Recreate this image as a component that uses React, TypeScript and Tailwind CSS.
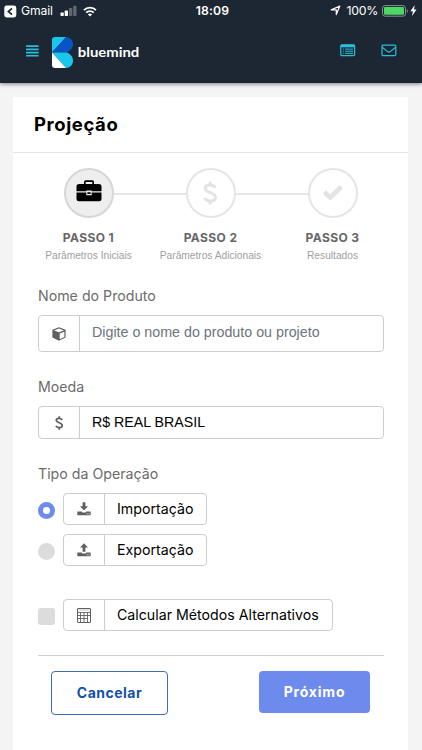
import type { ReactNode } from "react";

const sf = "font-['Inter','Liberation_Sans',sans-serif]";
const helv = "font-['Liberation_Sans',sans-serif]";

function StatusBar() {
  return (
    <div className={`flex h-[22px] items-center justify-between pl-1 pr-[5px] text-white ${sf}`}>
      <div className="flex w-[130px] items-center">
        <svg width="13" height="13" viewBox="0 0 13 13">
          <rect x="0.3" y="0.5" width="12" height="12" rx="2.4" fill="#fff" />
          <path d="M8 3.4 4.4 6.5 8 9.6" fill="none" stroke="#1c2733" strokeWidth="1.7" />
        </svg>
        <span className="ml-[4px] w-[39px] text-[12.2px] leading-none tracking-[-0.15px]">Gmail</span>
        <svg width="17" height="12" viewBox="0 0 17 12" fill="#fff">
          <rect x="0.5" y="7.5" width="3.3" height="3.5" rx="0.7" />
          <rect x="4.7" y="5.5" width="3.3" height="5.5" rx="0.7" />
          <rect x="9" y="3" width="3.3" height="8" rx="0.7" opacity="0.3" />
          <rect x="13.2" y="0.7" width="3.3" height="10.3" rx="0.7" opacity="0.3" />
        </svg>
        <svg className="ml-[6px]" width="14" height="11" viewBox="0 0 14 11" fill="none" stroke="#fff" strokeWidth="1.8">
          <path d="M1 4.1C4.2.8 9.8.8 13 4.1" />
          <path d="M3.2 6.6C5.3 4.5 8.7 4.5 10.8 6.6" />
          <path d="M7 10.6 4.9 8.4Q7 6.7 9.1 8.4Z" fill="#fff" stroke="none" />
        </svg>
      </div>
      <span className="ml-[4px] mt-px text-[12.2px] font-semibold leading-none tracking-[0.2px]">18:09</span>
      <div className="flex w-[130px] items-center justify-end">
        <svg width="11" height="11" viewBox="0 0 11 11" fill="none" stroke="#fff" strokeWidth="1.2" strokeLinejoin="round">
          <path d="M9.8 1.1 6.3 9.6V4.8H1.2Z" />
        </svg>
        <span className="ml-[5px] mt-px text-[12.3px] leading-none tracking-[-0.25px]">100%</span>
        <svg className="ml-[4px]" width="27" height="12" viewBox="0 0 27 12">
          <rect x="0.5" y="0.6" width="23" height="10.6" rx="2.6" fill="none" stroke="#8b9097" />
          <rect x="2" y="2" width="20" height="7.8" rx="1.3" fill="#4bd964" />
          <path d="M24.8 4v4c1.4-.6 1.4-3.4 0-4" fill="#8b9097" />
        </svg>
        <svg className="ml-[1px]" width="7" height="11" viewBox="0 0 7 11" fill="#fff">
          <path d="M4.7 0 .4 6.2h2.5L2 11l4.5-6.4H4Z" />
        </svg>
      </div>
    </div>
  );
}

function Header() {
  return (
    <header className="h-[83px] shrink-0 bg-[#1c2733] shadow-[0_1px_4px_rgba(0,0,0,0.5)]">
      <StatusBar />
      <div className="flex h-[60px] items-center pl-[26px] pr-[25px]">
        <svg className="-mt-[3px]" width="13" height="12" viewBox="0 0 13 12" fill="#27c0dc">
          <rect width="12.7" height="1.7" y="0.3" rx=".5" />
          <rect width="12.7" height="1.7" y="3.5" rx=".5" />
          <rect width="12.7" height="1.7" y="6.7" rx=".5" />
          <rect width="12.7" height="1.7" y="9.9" rx=".5" />
        </svg>
        <svg className="ml-[13px]" width="21" height="31" viewBox="0 0 21 31">
          <path d="M3 0H14L0 15.5V3Q0 0 3 0Z" fill="#19c7ee" />
          <path d="M14 0C21.5 .6 23.5 9.5 17.6 13.8Q16.3 15 14.5 15.5H0Z" fill="#0755c5" />
          <path d="M0 15.5H14.5C23.5 18 23 30.5 14 31Z" fill="#19c7ee" />
          <path d="M0 15.5 14 31H3Q0 31 0 28Z" fill="#fff" />
        </svg>
        <svg className="ml-[4px]" width="64" height="20" viewBox="0 0 64 20">
          <text x="0.8" y="15.2" textLength="61.5" lengthAdjust="spacingAndGlyphs" fill="#fff" className="font-['Lato',sans-serif] text-[13.6px] font-bold">
            bluemind
          </text>
        </svg>
        <div className="-mt-[3px] ml-auto flex items-center gap-[25px]">
          <svg className="-mt-px" width="16" height="13" viewBox="0 0 16 13" fill="none" stroke="#27c0dc">
            <rect x="0.8" y="0.8" width="13.8" height="10.8" rx="1.3" strokeWidth="1.2" />
            <path d="M1 2H14.5" strokeWidth="2.6" />
            <path d="M2.8 5.1h1M5 5.1h8M2.8 7.2h1M5 7.2h8M2.8 9.3h1M5 9.3h8" strokeWidth="1" />
          </svg>
          <svg width="16" height="13" viewBox="0 0 16 13" fill="none" stroke="#27c0dc" strokeWidth="1.2">
            <rect x="1" y="1.1" width="13.8" height="10.6" rx="1.2" />
            <path d="M1.2 3.2 6.6 7.6Q7.9 8.5 9.2 7.6L14.6 3.2" />
          </svg>
        </div>
      </div>
    </header>
  );
}

const Dollar = ({ className, size }: { className: string; size: number }) => (
  <svg className={className} width={size * 0.6} height={size} viewBox="0 0 15 25" fill="none" stroke="currentColor" strokeWidth="3.1">
    <path d="M7.5 0.5V4M7.5 21V24.5M13 6.8C10 3.3 2.3 3.2 2.3 7.8C2.3 12.8 13 11.5 13 16.8C13 21.6 5 22.3 1.4 17.8" />
  </svg>
);

const Briefcase = () => (
  <svg className="-mt-[5px]" width="26" height="22" viewBox="0 0 26 22" fill="#000">
    <path d="M8 4V2Q8 .3 9.7.3H16.3Q18 .3 18 2V4H23Q25.5 4 25.5 6.5V11.3H15.7V10.6H10.3V11.3H.5V6.5Q.5 4 3 4ZM9.7 4H16.3V2H9.7Z" fillRule="evenodd" />
    <path d="M.5 12.4H10.3V15.3H15.7V12.4H25.5V18.7Q25.5 21.2 23 21.2H3Q.5 21.2.5 18.7Z" />
    <path d="M11.4 12.2H14.6V14H11.4Z" />
  </svg>
);

const Check = () => (
  <svg className="-mt-px" width="22" height="18" viewBox="0 0 22 18" fill="none" stroke="#e3e3e3" strokeWidth="4.8">
    <path d="M2.4 8 8.2 13.4 19.3 2.8" strokeLinejoin="miter" />
  </svg>
);

const Cube = () => (
  <svg width="14" height="14" viewBox="0 0 14 14">
    <path d="M7 .2 13.6 2.8V10.6L7 13.8.4 10.6V2.8Z" fill="#606060" />
    <path d="M7 1.6 11.9 3.4 7 5.3 2.1 3.4Z" fill="#fff" />
    <path d="M7.7 6.6 12.4 4.7V9.9L7.7 12.2Z" fill="#fff" />
  </svg>
);

const Transfer = ({ up }: { up?: boolean }) => (
  <svg width="14" height="14" viewBox="0 0 14 14" fill="#606060">
    <path d={up ? "M7 .3 11 4.6H8.4V8.7H5.6V4.6H3Z" : "M5.6.3H8.4V4.2H11L7 8.5 3 4.2H5.6Z"} />
    <path d="M.3 10Q.3 9.4.9 9.4H4.6Q5.2 10.6 7 10.6 8.8 10.6 9.4 9.4H13.1Q13.7 9.4 13.7 10V12.6Q13.7 13.2 13.1 13.2H.9Q.3 13.2.3 12.6Z" />
    <path d="M9.7 11.3h.9v.9h-.9ZM11.6 11.3h.9v.9h-.9Z" fill="#fff" />
  </svg>
);

const Calculator = () => (
  <svg width="14" height="15" viewBox="0 0 14 15" fill="none" stroke="#606060">
    <rect x=".5" y=".5" width="13" height="14" rx=".5" strokeWidth="1" />
    <path d="M.5 4.5H13.5M.5 7.5H13.5M.5 10.5H10.5M3.5 4.5V14.5M7 4.5V14.5M10.5 4.5V14.5" strokeWidth=".9" />
    <path d="M1.5 2H12.5" strokeWidth=".4" />
  </svg>
);

function Step({ icon, title, sub, active }: { icon: ReactNode; title: string; sub: string; active?: boolean }) {
  return (
    <div className="flex w-[122px] flex-col items-center">
      <div className={`z-10 flex h-[50px] w-[50px] items-center justify-center rounded-full border-2 ${active ? "border-[#d6d6d6] bg-[#eeeeee]" : "border-[#e5e5e5] bg-white"}`}>
        {icon}
      </div>
      <div className={`mt-[11px] whitespace-nowrap text-[12px] font-bold leading-[18px] tracking-[0.4px] text-[#666] ${sf}`}>{title}</div>
      <div className={`mt-[2px] whitespace-nowrap text-[10.2px] leading-[14px] text-[#a0a0a0] ${helv}`}>{sub}</div>
    </div>
  );
}

function Field({ icon, children, className }: { icon: ReactNode; children: ReactNode; className: string }) {
  return (
    <div className={`flex rounded-[4px] border border-[#cdcdcd] bg-white ${className}`}>
      <div className="flex w-[41px] shrink-0 items-center justify-center border-r border-[#cdcdcd]">{icon}</div>
      <div className="flex items-center whitespace-nowrap pl-[12px]">{children}</div>
    </div>
  );
}

const label = `text-[14.2px] leading-[20px] text-[#6b6b6b] ${sf}`;
const option = `text-[14.2px] text-black ${sf}`;

export default function App() {
  return (
    <div className="flex h-[750px] w-[422px] flex-col overflow-hidden bg-[#f4f4f4]">
      <Header />
      <main className="ml-[13px] mr-[14px] mt-[14px] flex flex-1 flex-col bg-white">
        <div className="flex h-[56px] items-center border-b border-[#e4e4e4] pl-[21px]">
          <h1 className={`text-[18.5px] font-bold leading-none tracking-[0.6px] text-black ${sf}`}>Projeção</h1>
        </div>
        <div className="flex justify-center pt-[15px]">
          <div className="relative flex">
            <div className="absolute left-[61px] right-[61px] top-[25px] h-[2px] bg-[#e5e5e5]" />
            <Step active icon={<Briefcase />} title="PASSO 1" sub="Parâmetros Iniciais" />
            <Step icon={<Dollar className="text-[#e3e3e3]" size={24} />} title="PASSO 2" sub="Parâmetros Adicionais" />
            <Step icon={<Check />} title="PASSO 3" sub="Resultados" />
          </div>
        </div>
        <form className="ml-[25px] mr-[24px] mt-[23px] flex flex-col">
          <div className={label}>Nome do Produto</div>
          <Field icon={<Cube />} className="mt-[9px] h-[37px]">
            <span className={`-mt-[2px] text-[14.28px] text-[#6c757d] ${helv}`}>Digite o nome do produto ou projeto</span>
          </Field>
          <div className={`mt-[25px] ${label}`}>Moeda</div>
          <Field icon={<Dollar className="text-[#606060]" size={14} />} className="mt-[9px] h-[33px]">
            <span className={`text-[14.2px] text-black ${helv}`}>R$ REAL BRASIL</span>
          </Field>
          <div className={`mt-[25px] ${label}`}>Tipo da Operação</div>
          <div className="mt-[9px] flex items-center gap-[8px]">
            <span className="mt-[3px] flex h-[17px] w-[17px] items-center justify-center rounded-full bg-[#6c8bed]">
              <span className="h-[7px] w-[7px] rounded-full bg-white" />
            </span>
            <Field icon={<Transfer />} className="h-[32px] w-[144px]">
              <span className={option}>Importação</span>
            </Field>
          </div>
          <div className="mt-[9px] flex items-center gap-[8px]">
            <span className="mt-[3px] h-[17px] w-[17px] rounded-full bg-[#dcdcdc]" />
            <Field icon={<Transfer up />} className="h-[32px] w-[144px]">
              <span className={option}>Exportação</span>
            </Field>
          </div>
          <div className="mt-[33px] flex items-center gap-[8px]">
            <span className="mt-[3px] h-[17px] w-[17px] rounded-[3px] bg-[#dcdcdc]" />
            <Field icon={<Calculator />} className="h-[32px] w-[270px]">
              <span className={option}>Calcular Métodos Alternativos</span>
            </Field>
          </div>
          <hr className="mt-[24px] border-[#cfcfcf]" />
          <div className="mt-[15px] flex items-start justify-between pl-[13px] pr-[14px]">
            <button type="button" className={`h-[44px] w-[117px] rounded-[4px] border border-[#3f6cba] pb-[2px] text-[14px] font-bold tracking-[0.5px] text-[#1251ad] ${sf}`}>
              Cancelar
            </button>
            <button type="button" className={`h-[42px] w-[111px] rounded-[4px] bg-[#6c8bed] pb-[2px] text-[14px] font-bold tracking-[0.8px] text-white ${sf}`}>
              Próximo
            </button>
          </div>
        </form>
      </main>
    </div>
  );
}
